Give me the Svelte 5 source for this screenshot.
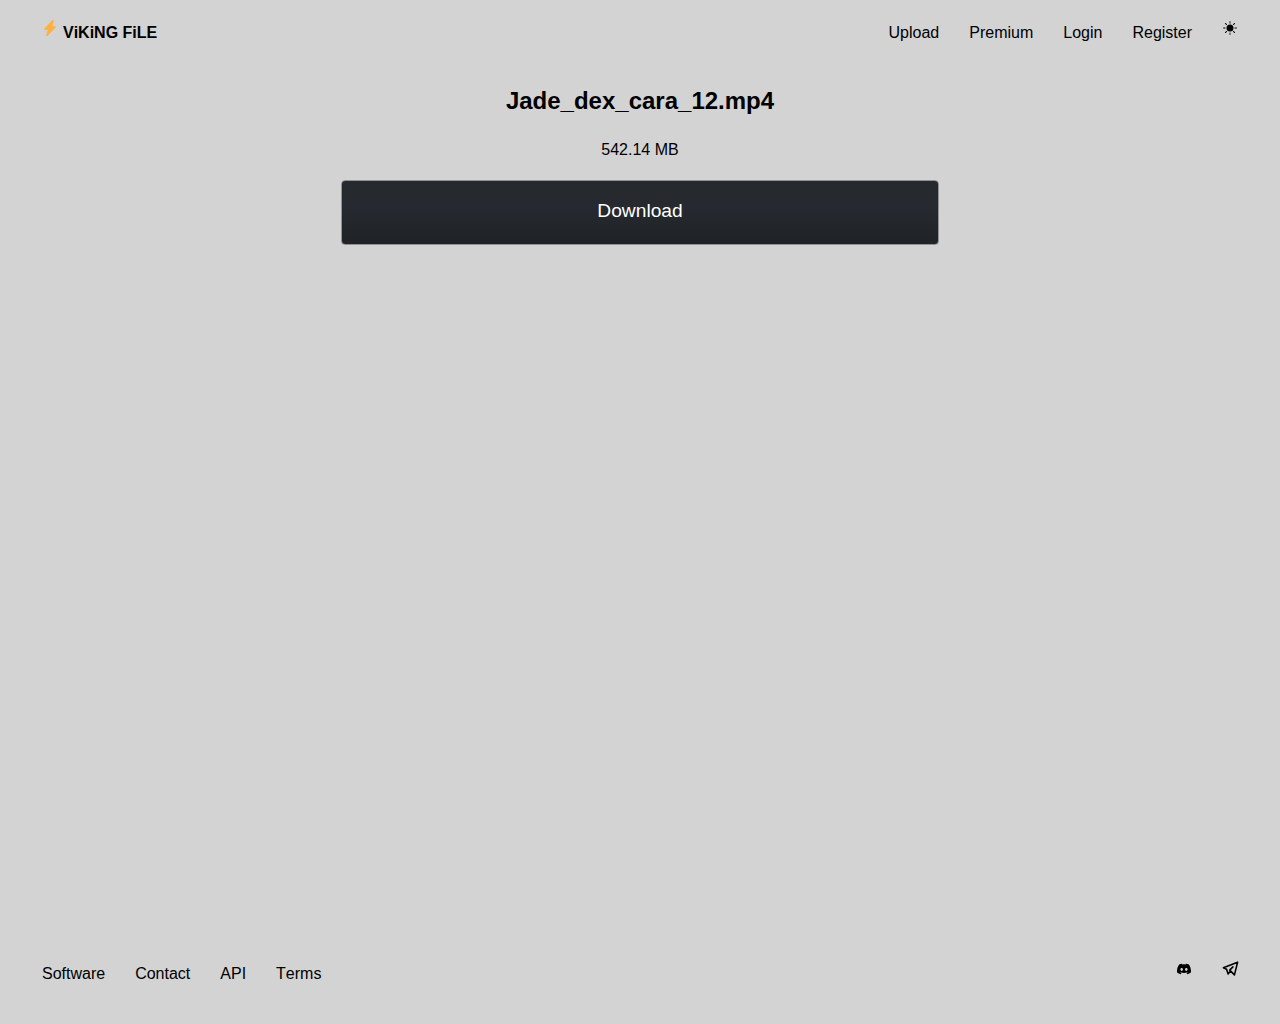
<script>
	const topLinks = ['Upload', 'Premium', 'Login', 'Register']
	const footLinks = ['Software', 'Contact', 'API', 'Terms']
</script>

<div class="page">
	<header class="top">
		<a class="brand" href="#home">
			<svg class="bolt" viewBox="0 0 16 16" width="16" height="16" fill="#ffb040" stroke="#ffb040" stroke-width="0.7" stroke-linejoin="round">
				<path d="M11.251.068a.5.5 0 0 1 .227.58L9.677 6.5H13a.5.5 0 0 1 .364.843l-8 8.5a.5.5 0 0 1-.842-.49L6.323 9.5H3a.5.5 0 0 1-.364-.843l8-8.5a.5.5 0 0 1 .615-.09z" />
			</svg>
			<span>ViKiNG FiLE</span>
		</a>
		<nav class="links">
			{#each topLinks as link}
				<a href="#{link}">{link}</a>
			{/each}
			<svg class="sun" viewBox="0 0 16 16" width="14" height="14" fill="#000">
				<path d="M8 12a4 4 0 1 0 0-8 4 4 0 0 0 0 8zM8 0a.5.5 0 0 1 .5.5v2a.5.5 0 0 1-1 0v-2A.5.5 0 0 1 8 0zm0 13a.5.5 0 0 1 .5.5v2a.5.5 0 0 1-1 0v-2A.5.5 0 0 1 8 13zm8-5a.5.5 0 0 1-.5.5h-2a.5.5 0 0 1 0-1h2a.5.5 0 0 1 .5.5zM3 8a.5.5 0 0 1-.5.5h-2a.5.5 0 0 1 0-1h2A.5.5 0 0 1 3 8zm10.657-5.657a.5.5 0 0 1 0 .707l-1.414 1.415a.5.5 0 1 1-.707-.708l1.414-1.414a.5.5 0 0 1 .707 0zm-9.193 9.193a.5.5 0 0 1 0 .707L3.05 13.657a.5.5 0 0 1-.707-.707l1.414-1.414a.5.5 0 0 1 .707 0zm9.193 2.121a.5.5 0 0 1-.707 0l-1.414-1.414a.5.5 0 0 1 .707-.707l1.414 1.414a.5.5 0 0 1 0 .707zM4.464 4.465a.5.5 0 0 1-.707 0L2.343 3.05a.5.5 0 1 1 .707-.707l1.414 1.414a.5.5 0 0 1 0 .708z" />
			</svg>
		</nav>
	</header>

	<main class="file">
		<h1>Jade_dex_cara_12.mp4</h1>
		<p class="size">542.14 MB</p>
		<button class="download">Download</button>
	</main>

	<footer class="bottom">
		<nav class="links">
			{#each footLinks as link}
				<a href="#{link}">{link}</a>
			{/each}
		</nav>
		<div class="social">
			<svg viewBox="0 0 16 16" width="14" height="14" fill="#000">
				<path d="M13.545 2.907a13.227 13.227 0 0 0-3.257-1.011.05.05 0 0 0-.052.025c-.141.25-.297.577-.406.833a12.19 12.19 0 0 0-3.658 0 8.258 8.258 0 0 0-.412-.833.051.051 0 0 0-.052-.025c-1.125.194-2.22.534-3.257 1.011a.041.041 0 0 0-.021.018C.356 6.024-.213 9.047.066 12.032c.001.014.01.028.021.037a13.276 13.276 0 0 0 3.995 2.02.05.05 0 0 0 .056-.019c.308-.42.582-.863.818-1.329a.05.05 0 0 0-.01-.059.051.051 0 0 0-.018-.011 8.875 8.875 0 0 1-1.248-.595.05.05 0 0 1-.02-.066.051.051 0 0 1 .015-.019c.084-.063.168-.129.248-.195a.05.05 0 0 1 .051-.007c2.619 1.196 5.454 1.196 8.041 0a.052.052 0 0 1 .053.007c.08.066.164.132.248.195a.051.051 0 0 1-.004.085 8.254 8.254 0 0 1-1.249.594.05.05 0 0 0-.03.03.052.052 0 0 0 .003.041c.24.465.515.909.817 1.329a.05.05 0 0 0 .056.019 13.235 13.235 0 0 0 4.001-2.02.049.049 0 0 0 .021-.037c.334-3.451-.559-6.449-2.366-9.106a.034.034 0 0 0-.02-.019Zm-8.198 7.307c-.789 0-1.438-.724-1.438-1.612 0-.889.637-1.613 1.438-1.613.807 0 1.45.73 1.438 1.613 0 .888-.637 1.612-1.438 1.612Zm5.316 0c-.788 0-1.438-.724-1.438-1.612 0-.889.637-1.613 1.438-1.613.807 0 1.451.73 1.438 1.613 0 .888-.631 1.612-1.438 1.612Z" />
			</svg>
			<svg class="plane" viewBox="0 0 24 24" width="19" height="19" fill="none" stroke="#000" stroke-width="2" stroke-linecap="round" stroke-linejoin="round">
				<path d="M15 10l-4 4l6 6l4 -16l-18 7l4 2l2 6l3 -4" />
			</svg>
		</div>
	</footer>
</div>

<style>
	:global(body) {
		background: #d3d3d3;
		font-family: 'Liberation Sans', Arial, sans-serif;
		font-kerning: none;
		color: #000;
	}
	a {
		color: inherit;
		text-decoration: none;
	}
	.page {
		min-height: 100vh;
		display: flex;
		flex-direction: column;
	}
	.top {
		display: flex;
		justify-content: space-between;
		align-items: flex-start;
		padding: 20px 42px 0;
		height: 48px;
	}
	.brand {
		display: flex;
		align-items: flex-start;
		gap: 5px;
		font-weight: 700;
		font-size: 16px;
		line-height: 24px;
	}
	.brand span,
	.top .links a {
		margin-top: 1px;
	}
	.bolt {
		flex: none;
	}
	.links {
		display: flex;
		align-items: flex-start;
		gap: 30px;
		font-size: 16px;
		line-height: 24px;
	}
	.sun {
		margin: 1px;
	}
	.file {
		flex: 1;
		display: flex;
		flex-direction: column;
		align-items: center;
	}
	h1 {
		margin: 18px 0 0;
		font-size: 24px;
		line-height: 29px;
	}
	.size {
		margin: 23px 0 0;
		font-size: 16px;
		line-height: 24px;
	}
	.download {
		margin-top: 18px;
		width: 598px;
		height: 65px;
		padding: 0 0 4px;
		border: 1px solid #8f9194;
		border-radius: 4px;
		background: linear-gradient(#25292d, #262a30 40%, #1f2326);
		color: #fff;
		font-family: inherit;
		font-size: 19.2px;
	}
	.bottom {
		display: flex;
		justify-content: space-between;
		align-items: flex-start;
		padding: 0 42px 27px;
		height: 65px;
		box-sizing: border-box;
	}
	.bottom .links {
		padding-top: 3px;
	}
	.social {
		display: flex;
		align-items: center;
		gap: 30px;
	}
	.plane {
		margin-right: -1.5px;
	}
</style>
